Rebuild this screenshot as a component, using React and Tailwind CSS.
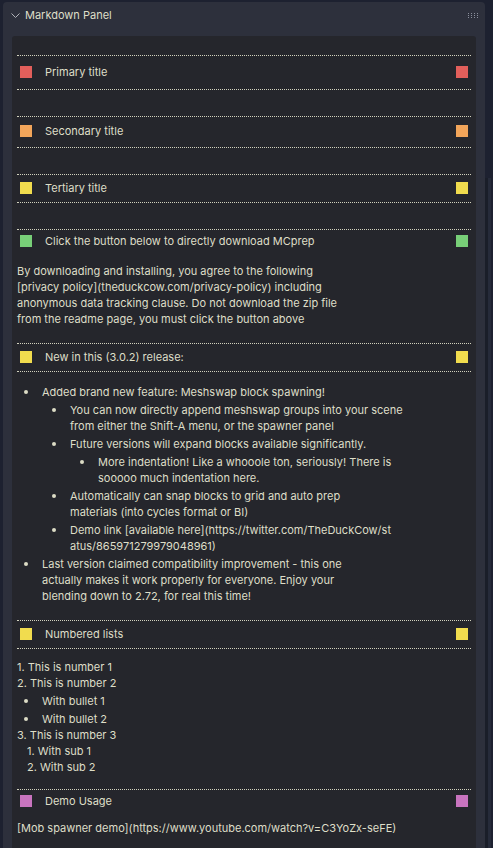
import React from 'react';

const line = 'border-t border-dotted border-[#d2d2be]';

const Heading = ({ color, pad, bottom, className = '', children }) => (
  <div className={className}>
    <div className={line} />
    <div className={pad}>
      <div className="flex items-center h-[12px] px-[3px]">
        <span className={`w-3 h-3 shrink-0 ${color}`} />
        <span className="flex-1 ml-[13px] leading-4 whitespace-nowrap">{children}</span>
        <span className={`w-3 h-3 shrink-0 ${color}`} />
      </div>
    </div>
    {bottom && <div className={line} />}
  </div>
);

const Item = ({ lines, children }) => (
  <li className="flex">
    <span className="w-[25px] shrink-0 h-4 flex items-center pl-[7px]">
      <span className="w-1 h-1 rounded-full bg-[#dcdcc6]" />
    </span>
    <div className="min-w-0">
      {lines.map((l) => (
        <div key={l} className="h-4 whitespace-nowrap">{l}</div>
      ))}
      {children}
    </div>
  </li>
);

const Sub = ({ children }) => (
  <ul className="mt-[2px] pl-[3px] flex flex-col gap-[2px]">{children}</ul>
);

const Grip = () => (
  <svg width="10" height="5" viewBox="0 0 10 5" className="block">
    {[0, 3, 6, 9].map((x) =>
      [0, 2, 4].map((y) => <rect key={`${x}-${y}`} x={x} y={y} width="1" height="1" fill="#8a8f9c" />)
    )}
  </svg>
);

export default function App() {
  return (
    <div
      className="h-[848px] overflow-hidden bg-[#1d2130] flex pl-[3px] pt-[2px] text-[11px] leading-4 text-[#dedec8]"
      style={{ fontFamily: 'Inter, "Noto Sans", sans-serif' }}
    >
      <div className="flex-1 flex flex-col bg-[#2d303c] rounded-t-[4px]">
        <div className="h-[26px] flex items-center pl-[8px] pr-[7px] shrink-0">
          <svg width="9" height="5" viewBox="0 0 9 5" className="block">
            <path d="M0.5 0.5 L4.5 4.5 L8.5 0.5" fill="none" stroke="#b0b2b8" strokeWidth="1" />
          </svg>
          <span className="ml-[5px] flex-1">Markdown Panel</span>
          <Grip />
        </div>
        <div className="flex-1 px-[9px] pt-[8px]">
          <div className="h-full bg-[#25262c] rounded-t-[3px] px-[5px] pt-[19px]">
            <Heading color="bg-[#e25f5b]" pad="pt-[10px] pb-[11px]" bottom>Primary title</Heading>
            <Heading color="bg-[#f2a55a]" pad="pt-[8px] pb-[10px]" bottom className="mt-[26px]">Secondary title</Heading>
            <Heading color="bg-[#f1dc4e]" pad="pt-[7px] pb-[8px]" bottom className="mt-[26px]">Tertiary title</Heading>
            <Heading color="bg-[#78cf78]" pad="pt-[5px]" className="mt-[26px]">
              Click the button below to directly download MCprep
            </Heading>
            <div className="mt-[16px] whitespace-nowrap">
              <div>By downloading and installing, you agree to the following</div>
              <div>[privacy policy](theduckcow.com/privacy-policy) including</div>
              <div>anonymous data tracking clause. Do not download the zip file</div>
              <div>from the readme page, you must click the button above</div>
            </div>
            <Heading color="bg-[#f1dc4e]" pad="pt-[7px] pb-[8px]" bottom className="mt-[16px]">
              New in this (3.0.2) release:
            </Heading>
            <ul className="mt-[12px] flex flex-col gap-[2px]">
              <Item lines={['Added brand new feature: Meshswap block spawning!']}>
                <Sub>
                  <Item
                    lines={[
                      'You can now directly append meshswap groups into your scene',
                      'from either the Shift-A menu, or the spawner panel',
                    ]}
                  />
                  <Item lines={['Future versions will expand blocks available significantly.']}>
                    <Sub>
                      <Item
                        lines={[
                          'More indentation! Like a whooole ton, seriously! There is',
                          'sooooo much indentation here.',
                        ]}
                      />
                    </Sub>
                  </Item>
                  <Item
                    lines={['Automatically can snap blocks to grid and auto prep', 'materials (into cycles format or BI)']}
                  />
                  <Item
                    lines={['Demo link [available here](https://twitter.com/TheDuckCow/st', 'atus/865971279979048961)']}
                  />
                </Sub>
              </Item>
              <Item
                lines={[
                  'Last version claimed compatibility improvement - this one',
                  'actually makes it work properly for everyone. Enjoy your',
                  'blending down to 2.72, for real this time!',
                ]}
              />
            </ul>
            <Heading color="bg-[#f1dc4e]" pad="pt-[7px] pb-[8px]" bottom className="mt-[16px]">
              Numbered lists
            </Heading>
            <div className="mt-[10px] whitespace-nowrap">
              <div>1. This is number 1</div>
              <div>2. This is number 2</div>
              <ul className="mt-[2px] flex flex-col gap-[2px]">
                <Item lines={['With bullet 1']} />
                <Item lines={['With bullet 2']} />
              </ul>
              <div>3. This is number 3</div>
              <div className="pl-[10px]">1. With sub 1</div>
              <div className="pl-[10px]">2. With sub 2</div>
            </div>
            <Heading color="bg-[#c874bf]" pad="pt-[5px]" className="mt-[14px]">Demo Usage</Heading>
            <div className="mt-[13px] whitespace-nowrap">
              [Mob spawner demo](https://www.youtube.com/watch?v=C3YoZx-seFE)
            </div>
          </div>
        </div>
      </div>
      <div className="w-[8px] flex flex-col">
        <div className="flex-1 flex pt-[176px]">
          <div className="w-[3px] bg-[#1a1e29]" />
          <div className="w-[3px] bg-[#262b3a]" />
        </div>
      </div>
    </div>
  );
}
